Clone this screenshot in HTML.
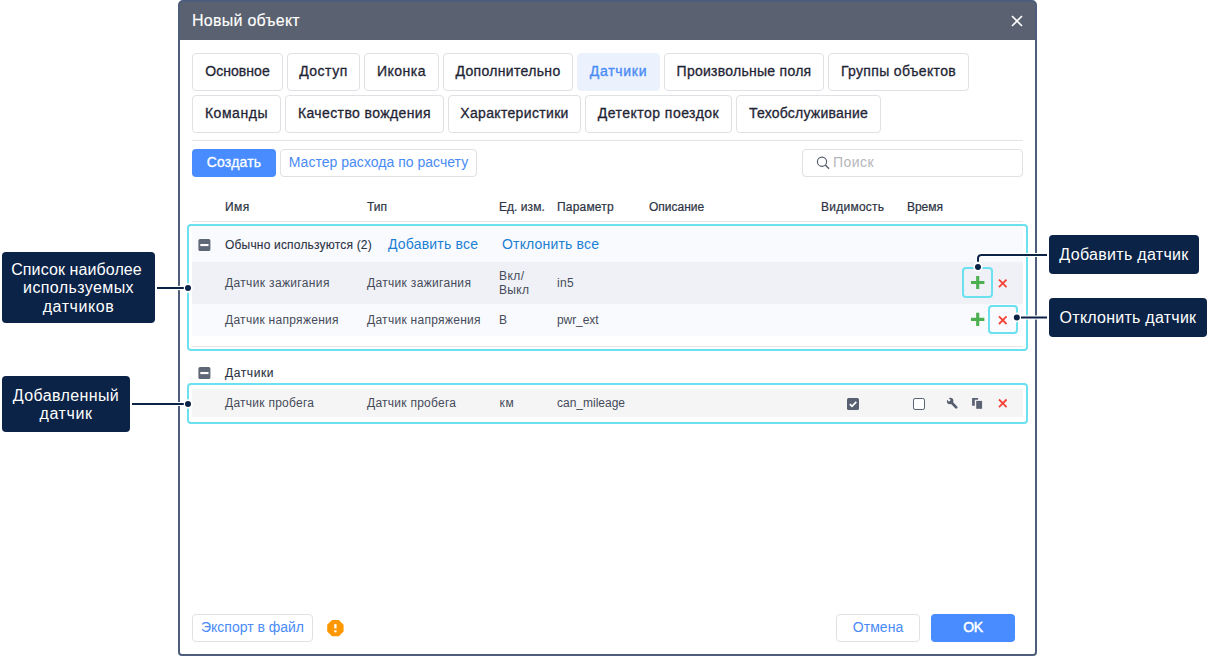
<!DOCTYPE html><html lang="ru"><head><meta charset="utf-8"><title>Новый объект</title><style>
*{box-sizing:border-box;margin:0;padding:0}
html,body{width:1209px;height:656px;background:#fff;overflow:hidden}
body{position:relative;font-family:"Liberation Sans",sans-serif;font-size:14px;color:#1f2535}
.abs{position:absolute}
#dlg{position:absolute;left:178px;top:0;width:859px;height:656px;border:2px solid #4f5d7d;border-radius:5px 5px 4px 4px;background:#5a6170;overflow:hidden}
#hdr{position:absolute;left:0;top:38px;width:855px;height:614px;background:#fff}
#title{position:absolute;left:192px;top:0;height:40px;line-height:41px;font-size:16px;color:#fff;white-space:nowrap;-webkit-text-stroke:0.15px #fff}
.tab{position:absolute;height:38px;border:1px solid #e0e1e4;border-radius:4px;background:#fff;display:flex;align-items:center;justify-content:center;font-size:14px;color:#1f2535;white-space:nowrap;-webkit-text-stroke:0.3px #1f2535;padding-bottom:2px}
.tab.active{background:#ebf2fe;border-color:#ebf2fe;color:#4a8bf5;-webkit-text-stroke:0.35px #4a8bf5}
.hr{position:absolute;height:1px;background:#e3e3e3}
.btn{position:absolute;height:28px;border-radius:4px;display:flex;align-items:center;justify-content:center;font-size:14px;white-space:nowrap;padding-bottom:2px}
.btn.pri{background:#488cff;color:#fff;-webkit-text-stroke:0.3px #fff}
.btn.sec{background:#fff;border:1px solid #e0e1e4;color:#4a8bf5}
.th,.td,.gh{position:absolute;white-space:nowrap;font-size:12px;line-height:14px}
.th{color:#2c3344;-webkit-text-stroke:0.2px #2c3344}
.td{color:#454b5a}
.gh{color:#2a3142;-webkit-text-stroke:0.1px #2a3142}
.lnk{position:absolute;white-space:nowrap;font-size:14px;line-height:16px;color:#1b7fd3}
.row{position:absolute;left:192px;width:831px}
.cy{position:absolute;border:2px solid #6be0ef;border-radius:4px}
.co{position:absolute;background:#0b2347;border-radius:4px;color:#fff;font-size:16px;line-height:18.6px;text-align:center;display:flex;align-items:center;justify-content:center;white-space:nowrap}
.ln{position:absolute;background:#0b2347}
.dot{position:absolute;width:6px;height:6px;border-radius:50%;background:#0a2045}
svg{position:absolute;overflow:visible}
</style></head><body>
<div id="dlg"><div id="hdr"></div></div>
<div id="title"><span id="t_title" style="letter-spacing:0.265px;">Новый объект</span></div>
<svg style="left:1011px;top:15px" width="12" height="12" viewBox="0 0 12 12"><path d="M1 1 L11 11 M11 1 L1 11" stroke="#fff" stroke-width="1.6" fill="none"/></svg>
<div class="tab" style="left:192px;top:53px;width:91px"><span id="tb1" style="letter-spacing:0.035px;">Основное</span></div>
<div class="tab" style="left:287px;top:53px;width:73px"><span id="tb2" style="letter-spacing:0.504px;">Доступ</span></div>
<div class="tab" style="left:364px;top:53px;width:75px"><span id="tb3" style="letter-spacing:0.521px;">Иконка</span></div>
<div class="tab" style="left:443px;top:53px;width:130px"><span id="tb4" style="letter-spacing:0.336px;">Дополнительно</span></div>
<div class="tab active" style="left:577px;top:53px;width:83px"><span id="tb5" style="letter-spacing:0.700px;">Датчики</span></div>
<div class="tab" style="left:664px;top:53px;width:160px"><span id="tb6" style="letter-spacing:0.264px;">Произвольные поля</span></div>
<div class="tab" style="left:828px;top:53px;width:141px"><span id="tb7" style="letter-spacing:0.337px;">Группы объектов</span></div>
<div class="tab" style="left:192px;top:95px;width:89px"><span id="tb8" style="letter-spacing:0.545px;">Команды</span></div>
<div class="tab" style="left:285px;top:95px;width:159px"><span id="tb9" style="letter-spacing:0.390px;">Качество вождения</span></div>
<div class="tab" style="left:448px;top:95px;width:133px"><span id="tb10" style="letter-spacing:0.338px;">Характеристики</span></div>
<div class="tab" style="left:585px;top:95px;width:147px"><span id="tb11" style="letter-spacing:0.467px;">Детектор поездок</span></div>
<div class="tab" style="left:736px;top:95px;width:145px"><span id="tb12" style="letter-spacing:0.217px;">Техобслуживание</span></div>
<div class="hr" style="left:192px;top:140px;width:831px"></div>
<div class="btn pri" style="left:192px;top:149px;width:84px"><span id="b_create" style="letter-spacing:0.180px;">Создать</span></div>
<div class="btn sec" style="left:280px;top:149px;width:197px"><span id="b_master" style="letter-spacing:0.020px;">Мастер расхода по расчету</span></div>
<div class="abs" style="left:802px;top:149px;width:221px;height:28px;border:1px solid #e0e1e4;border-radius:4px;background:#fff"></div>
<svg style="left:816px;top:155px" width="14" height="14" viewBox="0 0 14 14"><g transform="translate(0.0 0.7)"><circle cx="6" cy="6" r="4.6" stroke="#555c6b" stroke-width="1.15" fill="none"/><path d="M9.4 9.4 L13 13" stroke="#555c6b" stroke-width="1.4" fill="none"/></g></svg>
<div class="abs" style="left:833px;top:148px;height:28px;line-height:28px;font-size:14px;color:#b5b6ba;white-space:nowrap"><span id="s_ph" style="letter-spacing:0.476px;">Поиск</span></div>
<div class="th" style="left:225px;top:200px"><span id="h1" style="letter-spacing:0.412px;">Имя</span></div>
<div class="th" style="left:367px;top:200px"><span id="h2" style="letter-spacing:-0.058px;">Тип</span></div>
<div class="th" style="left:499px;top:200px"><span id="h3" style="letter-spacing:0.047px;">Ед. изм.</span></div>
<div class="th" style="left:557px;top:200px"><span id="h4" style="letter-spacing:0.194px;">Параметр</span></div>
<div class="th" style="left:649px;top:200px"><span id="h5" style="letter-spacing:-0.003px;">Описание</span></div>
<div class="th" style="left:821px;top:200px"><span id="h6" style="letter-spacing:0.251px;">Видимость</span></div>
<div class="th" style="left:907px;top:200px"><span id="h7" style="letter-spacing:-0.027px;">Время</span></div>
<div class="hr" style="left:192px;top:221px;width:831px;background:#e6e6e6"></div>
<div class="row" style="top:226px;height:36px;background:#f9fafe"></div>
<div class="row" style="top:262px;height:42px;background:#f0f1f6"></div>
<div class="row" style="top:304px;height:32px;background:#f9fafe"></div>
<div class="hr" style="left:192px;top:346px;width:831px;background:#e6e6e6"></div>
<svg style="left:198px;top:239px" width="12" height="12" viewBox="0 0 12 12"><g transform="translate(0.4 0.0)"><rect x="0" y="0" width="12" height="12" rx="1.6" fill="#5f6776"/><rect x="1.9" y="5" width="8.2" height="2.1" fill="#fff"/></g></svg>
<div class="gh" style="left:225px;top:238px"><span id="g1" style="letter-spacing:0.189px;">Обычно используются (2)</span></div>
<div class="lnk" style="left:388px;top:236px"><span id="l1" style="letter-spacing:0.197px;">Добавить все</span></div>
<div class="lnk" style="left:502px;top:236px"><span id="l2" style="letter-spacing:0.173px;">Отклонить все</span></div>
<div class="td" style="left:225px;top:276px"><span id="r1a" style="letter-spacing:0.354px;">Датчик зажигания</span></div>
<div class="td" style="left:367px;top:276px"><span id="r1b" style="letter-spacing:0.320px;">Датчик зажигания</span></div>
<div class="td" style="left:499px;top:269px"><span id="r1c1" style="letter-spacing:0.455px;">Вкл/</span></div>
<div class="td" style="left:499px;top:283px"><span id="r1c2" style="letter-spacing:0.361px;">Выкл</span></div>
<div class="td" style="left:557px;top:276px"><span id="r1d" style="letter-spacing:0.342px;">in5</span></div>
<div class="td" style="left:225px;top:313px"><span id="r2a" style="letter-spacing:0.291px;">Датчик напряжения</span></div>
<div class="td" style="left:367px;top:313px"><span id="r2b" style="letter-spacing:0.291px;">Датчик напряжения</span></div>
<div class="td" style="left:499px;top:313px"><span id="r2c" style="letter-spacing:-0.400px;">В</span></div>
<div class="td" style="left:557px;top:313px"><span id="r2d" style="letter-spacing:-0.089px;">pwr_ext</span></div>
<svg style="left:970px;top:275px" width="14" height="14" viewBox="0 0 14 14"><g transform="translate(0.7 0.45)"><path d="M7 0.45 V13.55 M0.3 7 H13.7" stroke="#4caf50" stroke-width="3.1" fill="none"/></g></svg>
<svg style="left:997px;top:278px" width="10" height="10" viewBox="0 0 10 10"><g transform="translate(0.75 0.4)"><path d="M1.2 1.2 L8.8 8.8 M8.800 1.2 L1.2 8.800" stroke="#f44336" stroke-width="1.8" fill="none"/></g></svg>
<svg style="left:970px;top:312px" width="14" height="14" viewBox="0 0 14 14"><g transform="translate(0.7 0.35)"><path d="M7 0.45 V13.55 M0.3 7 H13.7" stroke="#4caf50" stroke-width="3.1" fill="none"/></g></svg>
<svg style="left:997px;top:315px" width="10" height="10" viewBox="0 0 10 10"><g transform="translate(0.75 0.2)"><path d="M1.2 1.2 L8.8 8.8 M8.800 1.2 L1.2 8.800" stroke="#f44336" stroke-width="1.8" fill="none"/></g></svg>
<svg style="left:198px;top:367px" width="12" height="12" viewBox="0 0 12 12"><g transform="translate(0.4 0.0)"><rect x="0" y="0" width="12" height="12" rx="1.6" fill="#5f6776"/><rect x="1.9" y="5" width="8.2" height="2.1" fill="#fff"/></g></svg>
<div class="gh" style="left:225px;top:366px"><span id="g2" style="letter-spacing:0.591px;">Датчики</span></div>
<div class="row" style="top:389px;height:28px;background:#f5f5f5"></div>
<div class="td" style="left:225px;top:396px"><span id="r3a" style="letter-spacing:0.260px;">Датчик пробега</span></div>
<div class="td" style="left:367px;top:396px"><span id="r3b" style="letter-spacing:0.260px;">Датчик пробега</span></div>
<div class="td" style="left:499.5px;top:396px"><span id="r3c" style="letter-spacing:0.700px;">км</span></div>
<div class="td" style="left:557px;top:396px"><span id="r3d" style="letter-spacing:-0.005px;">can_mileage</span></div>
<svg style="left:847px;top:398px" width="12" height="12" viewBox="0 0 12 12"><rect width="12" height="12" rx="1.6" fill="#586072"/><path d="M2.8 6.2 L5 8.4 L9.3 3.9" stroke="#fff" stroke-width="1.7" fill="none"/></svg>
<svg style="left:913px;top:398px" width="12" height="12" viewBox="0 0 12 12"><rect x="0.5" y="0.5" width="11" height="11" rx="1.6" fill="#fff" stroke="#5b6476" stroke-width="1"/></svg>
<svg style="left:940px;top:392px" width="24" height="24" viewBox="940 392 24 24"><g transform="translate(0.4 0.2)"><circle cx="949.7" cy="400.9" r="3.25" fill="#555d6e"/><path d="M950.5 401.700 L955.800 407.200" stroke="#555d6e" stroke-width="2.700" stroke-linecap="round" fill="none"/><path d="M949.500 400.700 L946.200 397.400" stroke="#f5f5f5" stroke-width="2.500" fill="none"/></g></svg>
<svg style="left:972px;top:398px" width="10" height="11" viewBox="0 0 10 11"><g transform="translate(0.1 0.0)"><path fill="#5a6273" d="M0 0 H6 V1.7 H2.7 V7.800 H0 Z"/><rect x="4.1" y="2.9" width="5.9" height="7.9" fill="#5a6273"/></g></svg>
<svg style="left:997px;top:398px" width="10" height="10" viewBox="0 0 10 10"><g transform="translate(0.8 0.3)"><path d="M1.2 1.2 L8.8 8.8 M8.800 1.2 L1.2 8.800" stroke="#f44336" stroke-width="1.8" fill="none"/></g></svg>
<div class="cy" style="left:187px;top:224px;width:841px;height:127px"></div>
<div class="cy" style="left:187px;top:383px;width:841px;height:41px"></div>
<div class="cy" style="left:962px;top:267px;width:31px;height:31px"></div>
<div class="cy" style="left:988px;top:305px;width:30px;height:29px"></div>
<div class="co" style="left:2px;top:252px;width:153px;height:71px;padding-top:2px"><div><span id="c1a" style="position:relative;left:-2px;letter-spacing:0.093px;">Список наиболее</span><br><span id="c1b" style="letter-spacing:0.391px;">используемых</span><br><span id="c1c" style="letter-spacing:0.562px;">датчиков</span></div></div>
<div class="co" style="left:2px;top:376px;width:128px;height:56px;padding-top:2.5px"><div><span id="c2a" style="letter-spacing:0.391px;">Добавленный</span><br><span id="c2b" style="letter-spacing:0.603px;">датчик</span></div></div>
<div class="co" style="left:1049px;top:235px;width:150px;height:39px;padding-top:2.4px"><span id="c3" style="letter-spacing:0.311px;">Добавить датчик</span></div>
<div class="co" style="left:1049px;top:298px;width:158px;height:39px;padding-top:2.4px"><span id="c4" style="letter-spacing:0.251px;">Отклонить датчик</span></div>
<svg style="left:0;top:0" width="1209" height="656" viewBox="0 0 1209 656"><path d="M157 288 H183.8" stroke="#fff" stroke-width="4.2" fill="none"/><path d="M132 404 H183.8" stroke="#fff" stroke-width="4.2" fill="none"/><path d="M978 261.8 V258.5 Q978 255 981.5 255 H1047" stroke="#fff" stroke-width="4.2" fill="none"/><path d="M1021 317.5 H1047" stroke="#fff" stroke-width="4.2" fill="none"/><circle cx="188" cy="288" r="4.8" fill="#fff"/><circle cx="188" cy="404" r="4.8" fill="#fff"/><circle cx="978" cy="267" r="4.8" fill="#fff"/><circle cx="1016.8" cy="317.4" r="4.8" fill="#fff"/><path d="M157 288 H183.8" stroke="#0b2347" stroke-width="2" fill="none"/><path d="M132 404 H183.8" stroke="#0b2347" stroke-width="2" fill="none"/><path d="M978 261.8 V258.5 Q978 255 981.5 255 H1047" stroke="#0b2347" stroke-width="2" fill="none"/><path d="M1021 317.5 H1047" stroke="#0b2347" stroke-width="2" fill="none"/><circle cx="188" cy="288" r="3" fill="#0b2347"/><circle cx="188" cy="404" r="3" fill="#0b2347"/><circle cx="978" cy="267" r="3" fill="#0b2347"/><circle cx="1016.8" cy="317.4" r="3" fill="#0b2347"/></svg>
<div class="btn sec" style="left:192px;top:614px;width:121px"><span id="f_exp" style="letter-spacing:-0.010px;">Экспорт в файл</span></div>
<svg style="left:327px;top:619px" width="16.4" height="16.3" viewBox="0 0 16.4 16.3"><g transform="translate(0.2 0.9)"><path d="M4.800 0 H11.600 L16.400 4.800 V11.500 L11.600 16.300 H4.800 L0 11.500 V4.800 Z" fill="#ff9800"/><rect x="7.050" y="4.2" width="2.300" height="4.3" fill="#fff"/><rect x="7.050" y="10.400" width="2.300" height="2" fill="#fff"/></g></svg>
<div class="btn sec" style="left:836px;top:614px;width:84px"><span id="f_cancel" style="letter-spacing:0.053px;">Отмена</span></div>
<div class="btn pri" style="left:931px;top:614px;width:84px;-webkit-text-stroke:0.5px #fff"><span id="f_ok" style="letter-spacing:-0.400px;">OK</span></div>
</body></html>
